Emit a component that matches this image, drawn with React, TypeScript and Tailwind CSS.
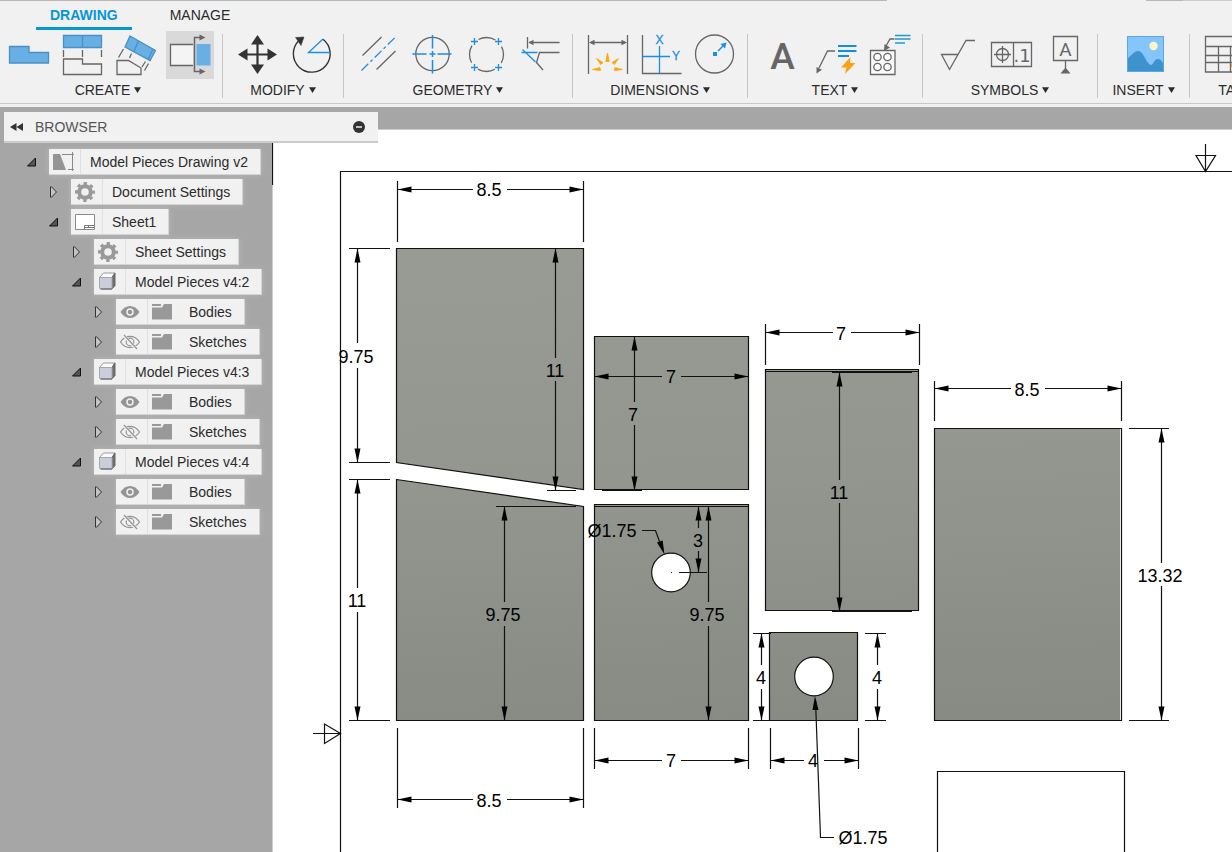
import React, { useState } from 'react';

const GREY = '#666666';
const BLUE = '#1a8fe8';
const SKY = '#68afe6';

interface ToolProps {
  label: string;
  active?: boolean;
  children: React.ReactNode;
}

const Tool: React.FC<ToolProps> = ({ label, active, children }) => (
  <button
    type="button"
    aria-label={label}
    className={`size-12 shrink-0 ${active ? 'bg-[#d9d9d9]' : 'hover:bg-[#e2e2e2]'}`}
  >
    <svg viewBox="0 0 48 48" className="size-12" fill="none" stroke={GREY} strokeWidth="1.3">
      {children}
    </svg>
  </button>
);

interface GroupProps {
  title: string;
  first?: boolean;
  children: React.ReactNode;
}

const Group: React.FC<GroupProps> = ({ title, first, children }) => (
  <div className="flex shrink-0">
    <div className={`flex min-w-[91px] flex-col items-center pr-2 ${first ? 'pl-1' : 'pl-[10px]'}`}>
      <div className="flex gap-[6px]">{children}</div>
      <button type="button" className="mt-[1px] flex h-5 items-center gap-1 pr-[2px] text-sm leading-5 text-[#2b2b2b]">
        {title}
        <svg viewBox="0 0 7 6" className="h-[6px] w-[7px]">
          <path d="M0 0.3h7L3.5 6z" fill="#2b2b2b" />
        </svg>
      </button>
    </div>
    <div className="mt-[3px] h-16 w-px bg-[#c6c6c6]" />
  </div>
);

const Toolbar = () => (
  <div className="flex h-[72px] overflow-hidden">
    <Group title="CREATE" first>
      <Tool label="Base View">
        <path d="M5.5 15.5H25v6h19.500v10.500h-39z" fill={SKY} stroke="#4a90c4" />
      </Tool>
      <Tool label="Projected View">
        <path d="M5.500 4.500h38v12h-38zM24.500 4.500v12" fill={SKY} stroke="#4a90c4" />
        <path d="M5.500 19v7M24.500 19v7M43.500 19v7" />
        <path d="M5.500 28h19v5h19v10.500h-38z" />
      </Tool>
      <Tool label="Auxiliary View">
        <path d="M18 5l25.500 14.500L38 29.500 13 16zM26.500 9.500L22 20.500M41 18l-5 10.500" fill={SKY} stroke="#4a90c4" />
        <path d="M11.500 18l-5 8.500M19.500 22.500l-2 4.500M33.500 30.500L30 36M36.500 32.500l-4 7" />
        <path d="M5 29.500h11.500L29 37v6.500H5z" />
      </Tool>
      <Tool label="Section View" active>
        <path d="M27 13.500H4.500v21H27z" fill="#f4f4f4" stroke="none" />
        <path d="M27 13.500H4.500v21H27" />
        <path d="M30.500 13h14v21.500h-14z" fill={SKY} stroke="none" />
        <path d="M34 6.500h-5.500v34H34" strokeWidth="1.500" />
        <path d="M33.500 3.500l6 3-6 3zM33.500 37.500l6 3-6 3z" fill={GREY} stroke="none" />
      </Tool>
    </Group>

    <Group title="MODIFY">
      <Tool label="Move">
        <path d="M24.500 8v31M9 23.500h31" stroke="#333" strokeWidth="2.200" />
        <path
          d="M24.500 4l6.500 9.500H18zM24.500 43l6.500-9.500H18zM5 23.500l9.500-6v12zM44 23.500l-9.500-6v12z"
          fill="#333"
          stroke="none"
        />
      </Tool>
      <Tool label="Rotate">
        <path d="M36 8.200A18.400 18.400 0 1 1 12 9.500" stroke="#333" strokeWidth="1.400" />
        <path d="M8.500 6.500L17 6l-3 8.500z" fill="#333" stroke="#333" strokeWidth="0.500" />
        <path d="M43 21.500H21.500L36 8" stroke={BLUE} />
      </Tool>
    </Group>

    <Group title="GEOMETRY">
      <Tool label="Centerline">
        <path d="M8.500 24.500l19-18.500M22.500 38.500l19-18.500" />
        <path d="M7.500 39.500L41.500 6" stroke={BLUE} strokeDasharray="9.500 3 3 3" />
      </Tool>
      <Tool label="Center Mark">
        <circle cx="24.500" cy="23" r="16.700" />
        <path
          d="M4.500 23h14M21.500 23h6M29.500 23h14M24.500 4v13.500M24.500 20v6M24.500 29v13.500"
          stroke={BLUE}
          strokeWidth="1.500"
        />
      </Tool>
      <Tool label="Center Mark Pattern">
        <circle cx="24.500" cy="23.500" r="17" strokeDasharray="17.800 8.900" strokeDashoffset="8.900" />
        <path
          d="M9 10.500h7M12.500 7v7M33 10.500h7M36.500 7v7M9 36.500h7M12.500 33v7M33 36.500h7M36.500 33v7"
          stroke={BLUE}
        />
      </Tool>
      <Tool label="Edge Extension">
        <path d="M11.500 6v11.500M13 11.500h30.500M43.500 21.500h-20l-3 10 6.500 7.500" />
        <path d="M12.500 11.500l5-2.800v5.600z" fill={GREY} stroke="none" />
        <path d="M5.500 21.500h16M6.500 18.500l13 12.500" stroke={BLUE} />
      </Tool>
    </Group>

    <Group title="DIMENSIONS">
      <Tool label="Dimension">
        <path d="M5.500 4v39M44.500 4v39M8 11.500h34" />
        <path d="M6 11.500l5.500-2.800v5.600zM44 11.500l-5.500-2.800v5.600z" fill={GREY} stroke="none" />
        <path
          d="M24.500 22l1.700 8.500h-3.400zM13.500 27.500l6.500 4-2.300 2zM35.500 27.500l-6.500 4 2.300 2zM9.500 38.500l7.500-2 .5 3zM39.500 38.500l-7.500-2-.5 3z"
          fill="#fba70b"
          stroke="#fba70b"
          strokeWidth="0.800"
        />
      </Tool>
      <Tool label="Ordinate Dimension">
        <path d="M5.500 4v38.500h39" />
        <path d="M22.500 15v27.500M5.500 25.500H33" stroke={BLUE} />
        <text x="22.500" y="12.500" textAnchor="middle" fontSize="12" fill={BLUE} stroke={BLUE} strokeWidth="0.300">
          X
        </text>
        <text x="39" y="29" textAnchor="middle" fontSize="12" fill={BLUE} stroke={BLUE} strokeWidth="0.300">
          Y
        </text>
      </Tool>
      <Tool label="Radius Dimension">
        <circle cx="23.500" cy="23" r="19" />
        <path d="M22 21h4v4h-4zM35.500 11.500l-1.500 6-4.500-4.500z" fill={BLUE} stroke="none" />
        <path d="M27 20l6-6" stroke={BLUE} strokeWidth="1.500" />
      </Tool>
    </Group>

    <Group title="TEXT">
      <Tool label="Text">
        <text x="24.500" y="37.500" textAnchor="middle" fontSize="37" fontWeight="500" fontFamily="Roboto, sans-serif" fill={GREY} stroke="none">
          A
        </text>
      </Tool>
      <Tool label="Leader Note">
        <path d="M23 20h-7.500L7 37" />
        <path d="M4.500 42.500l0-6.500 5.500 2.800z" fill={GREY} stroke="none" />
        <path d="M26 15h18.500M26 20h18.500M26 25h11" stroke="#0f8fe8" strokeWidth="2" />
        <path d="M38.500 26L29 36.500h5.500l-1.500 6.500 10.500-11H38z" fill="#f9a110" stroke="none" />
      </Tool>
      <Tool label="Hole Note">
        <path d="M4.500 19.500H29v24H4.500z" fill="#fafafa" />
        <circle cx="11.500" cy="26" r="3.700" />
        <circle cx="21.500" cy="26" r="3.700" />
        <circle cx="11.500" cy="36" r="3.700" />
        <circle cx="21.500" cy="36" r="3.700" />
        <path d="M28.500 8H24l-4 7" />
        <path d="M18 20l.500-7 5.500 3.500z" fill={GREY} stroke="none" />
        <path d="M29 4.500h15.500M29 8h15.500M29 12h10" stroke="#1b9bd1" />
      </Tool>
    </Group>

    <Group title="SYMBOLS">
      <Tool label="Surface Texture">
        <path d="M25.500 23.500h-17l8 15L33 9.500h9" />
      </Tool>
      <Tool label="Feature Control Frame">
        <path d="M4.500 11.500h40v24h-40zM26.500 11.500v24M7 23.500h17M15.500 15v17" />
        <circle cx="15.500" cy="23.500" r="6" />
        <text x="35" y="31" textAnchor="middle" fontSize="18" fontFamily="'DejaVu Sans', sans-serif" fill={GREY} stroke="none">
          .1
        </text>
      </Tool>
      <Tool label="Datum Identifier">
        <path d="M12.500 5.500h24v24h-24zM24.500 29.500v8" />
        <path d="M24.500 36.500l5 6h-10z" fill={GREY} stroke="none" />
        <text x="24.500" y="24.500" textAnchor="middle" fontSize="19" fontWeight="400" fontFamily="Roboto, sans-serif" fill={GREY} stroke="none">
          A
        </text>
      </Tool>
    </Group>

    <Group title="INSERT">
      <Tool label="Image">
        <path d="M6 5h37v36H6z" fill="#84c6fb" stroke="none" />
        <path
          d="M6 28c4-3 7-8 11-8 6 0 8 13 13 14 3-1 3-6 7-6 3 0 4 3 6 5v8H6z"
          fill="#3e92cd"
          stroke="none"
        />
        <path d="M6.500 5.500h36v35h-36z" stroke="#5aa7dc" strokeWidth="1" />
        <circle cx="32.500" cy="15" r="4.200" fill="#fbf7c4" stroke="none" />
      </Tool>
    </Group>

    <Group title="TABLES">
      <Tool label="Table">
        <path d="M5.500 5.500h39v35.500h-39zM5.500 15.500h39M5.500 24.500h39M5.500 31.500h39M18.500 15.500V41M30.500 15.500V41" />
        <path d="M31 33h12v3H31z" fill="#f9a110" stroke="none" />
      </Tool>
      <Tool label="Balloon">
        <circle cx="24" cy="18" r="12" />
        <path d="M16 27L6 41" />
      </Tool>
    </Group>
  </div>
);

type IconKind = 'drawing' | 'gear' | 'sheet' | 'box' | 'folder';

const NodeIcon: React.FC<{ kind: IconKind }> = ({ kind }) => (
  <svg viewBox="0 0 24 24" className="size-6" fill="none">
    {kind === 'drawing' && (
      <>
        <path d="M2 4h7l6 16H2z" fill="#949494" />
        <path d="M11 4.500h12M21.500 2v19M17 19.500h6" stroke="#8a8a8a" />
      </>
    )}
    {kind === 'gear' && (
      <>
        <circle cx="12" cy="12" r="5.800" stroke="#999" strokeWidth="4" />
        <circle cx="12" cy="12" r="8.500" stroke="#999" strokeWidth="3" strokeDasharray="3.300 3.376" strokeDashoffset="1.650" />
      </>
    )}
    {kind === 'sheet' && (
      <>
        <path d="M2.500 4.500h19v15h-19z" fill="#fff" stroke="#8a8a8a" />
        <path d="M11.500 19.500v-4h10M11.500 17.500h10M15.500 15.500v2" stroke="#777" />
      </>
    )}
    {kind === 'box' && (
      <>
        <path d="M3.500 7.500l4-4.500h11.500l-3 4.500z" fill="#fafafa" stroke="#999" strokeLinejoin="round" />
        <path d="M16 7.500l3-4.500v12.500l-3 3.500z" fill="#6d6f73" stroke="#666" strokeLinejoin="round" />
        <path d="M3.500 7.500H16V19H4.500l-1-1z" fill="#c9ced8" stroke="#a3a7ae" strokeLinejoin="round" />
        <path d="M4.500 19H16" stroke="#55585e" />
      </>
    )}
    {kind === 'folder' && (
      <path d="M2 4h9v2H2zM2 7.500h10l2-3.500h8v15.500H2z" fill="#999" />
    )}
  </svg>
);

const Eye: React.FC<{ open: boolean }> = ({ open }) => (
  <svg viewBox="0 0 24 24" className="size-6" fill="none">
    {open ? (
      <>
        <path d="M2.500 12c5-8 14-8 19 0-5 8-14 8-19 0z" fill="#949494" />
        <circle cx="12" cy="12" r="3" fill="#949494" stroke="#f1f1f1" strokeWidth="1.500" />
      </>
    ) : (
      <>
        <path d="M2.500 12c5-7.500 14-7.500 19 0-5 7.500-14 7.500-19 0z" stroke="#949494" strokeWidth="1.200" />
        <circle cx="12" cy="12" r="3.800" stroke="#949494" strokeWidth="1.200" />
        <path d="M5.500 5l13 14" stroke="#f1f1f1" strokeWidth="3" />
        <path d="M6 5l13 14" stroke="#949494" strokeWidth="1.200" />
      </>
    )}
  </svg>
);

interface TreeNode {
  label: string;
  icon: IconKind;
  level: number;
  expanded?: boolean;
  visible?: boolean;
}

const model = (label: string): TreeNode[] => [
  { label, icon: 'box', level: 2, expanded: true },
  { label: 'Bodies', icon: 'folder', level: 3, visible: true },
  { label: 'Sketches', icon: 'folder', level: 3, visible: false },
];

const nodes: TreeNode[] = [
  { label: 'Model Pieces Drawing v2', icon: 'drawing', level: 0, expanded: true },
  { label: 'Document Settings', icon: 'gear', level: 1 },
  { label: 'Sheet1', icon: 'sheet', level: 1, expanded: true },
  { label: 'Sheet Settings', icon: 'gear', level: 2 },
  ...model('Model Pieces v4:2'),
  ...model('Model Pieces v4:3'),
  ...model('Model Pieces v4:4'),
];

const indents = ['pl-[27px]', 'pl-[49px]', 'pl-[72px]', 'pl-[94px]'];

const Browser = () => (
  <aside className="w-[272px] shrink-0 pt-[5px]">
    <div className="relative z-10 ml-1 flex h-[31px] w-[374px] items-center border-b-2 border-[#cbcbcb] bg-[#f1f1f1] pr-3 pl-[6px]">
      <button type="button" aria-label="Collapse browser">
        <svg viewBox="0 0 13 8" className="h-2 w-[13px]" fill="#333">
          <path d="M6.500 0v8L0 4zM13 0v8L6.500 4z" />
        </svg>
      </button>
      <h2 className="ml-3 text-sm text-[#555]">BROWSER</h2>
      <button type="button" aria-label="Hide browser" className="ml-auto">
        <svg viewBox="0 0 14 14" className="size-[14px]">
          <circle cx="7" cy="7" r="6" fill="#333" />
          <path d="M4 7h6" stroke="#f1f1f1" strokeWidth="1.500" />
        </svg>
      </button>
    </div>
    <ul className="mt-1">
      {nodes.map((node, i) => (
        <li key={i} className={`flex h-[30px] items-center ${indents[node.level]}`}>
          <button type="button" aria-label={`Toggle ${node.label}`} className="w-[22px] shrink-0">
            <svg viewBox="0 0 10 12" className="h-3 w-[10px]">
              {node.expanded ? (
                <path d="M8.500 2v8h-8z" fill="#555" stroke="#111" />
              ) : (
                <path d="M1.500 0.800v10.400h1l5-5.200-5-5.200z" fill="#c4c4c4" stroke="#333" />
              )}
            </svg>
          </button>
          <div className="flex h-[26px] items-center border-r border-b border-[#d4d4d4] bg-[#f1f1f1] pr-3 shadow-[0_0_6px_rgba(255,255,255,0.2)]">
            {node.visible !== undefined && (
              <button
                type="button"
                aria-label={`Show ${node.label}`}
                className="flex h-full w-8 shrink-0 items-center border-r border-[#e0e0e0] pl-[2px]"
              >
                <Eye open={node.visible} />
              </button>
            )}
            <span
              className={`flex h-full w-8 shrink-0 items-center pl-[2px] ${
                node.visible === undefined ? 'border-r border-[#e0e0e0]' : ''
              }`}
            >
              <NodeIcon kind={node.icon} />
            </span>
            <span className="pl-[9px] text-sm whitespace-nowrap text-[#2b2b2b]">{node.label}</span>
          </div>
        </li>
      ))}
    </ul>
  </aside>
);

interface DimProps {
  at: number; // position of the dimension line on the other axis
  from: number;
  to: number;
  gap: [number, number];
  ext?: [number, number]; // extension lines
  label: string;
  tx: number;
  ty: number;
}

const Label: React.FC<{ x: number; y: number; children: string }> = ({ x, y, children }) => (
  <text x={x} y={y} textAnchor="middle" fill="#000" stroke="none">
    {children}
  </text>
);

const HDim: React.FC<DimProps> = ({ at, from, to, gap, ext, label, tx, ty }) => (
  <g>
    <path d={`M${from} ${at}H${gap[0]}M${gap[1]} ${at}H${to}`} />
    {ext && <path d={`M${from} ${ext[0]}V${ext[1]}M${to} ${ext[0]}V${ext[1]}`} />}
    <path d={`M${from} ${at}l14 -3v6zM${to} ${at}l-14 -3v6z`} fill="#000" stroke="none" />
    <Label x={tx} y={ty}>{label}</Label>
  </g>
);

const VDim: React.FC<DimProps> = ({ at, from, to, gap, ext, label, tx, ty }) => (
  <g>
    <path d={`M${at} ${from}V${gap[0]}M${at} ${gap[1]}V${to}`} />
    {ext && <path d={`M${ext[0]} ${from}H${ext[1]}M${ext[0]} ${to}H${ext[1]}`} />}
    <path d={`M${at} ${from}l-3 14h6zM${at} ${to}l-3 -14h6z`} fill="#000" stroke="none" />
    <Label x={tx} y={ty}>{label}</Label>
  </g>
);

const Sheet = () => (
  <svg
    viewBox="272 130 959 722"
    width="959"
    height="722"
    className="block overflow-visible"
    fill="none"
    stroke="#111"
    strokeWidth="1.200"
    fontSize="18"
    role="img"
    aria-label="Sheet1"
  >
    <defs>
      <linearGradient id="metal" gradientUnits="userSpaceOnUse" x1="700" y1="248" x2="720" y2="720">
        <stop offset="0" stopColor="#989a94" />
        <stop offset="0.500" stopColor="#93958f" />
        <stop offset="1" stopColor="#888a84" />
      </linearGradient>
    </defs>

    {/* sheet frame and centring marks */}
    <path d="M272.500 130V3000" stroke="#cdcdcd" strokeWidth="1" />
    <path d="M272.500 143v42" />
    <path d="M3000 171.500H340.500V3000" />
    <path d="M1205.500 144v27.500M1196 155.500h19.500l-10 16z" />
    <path d="M313 733.500h27.500M324.500 724v19.500l16-10z" />
    <path d="M937.500 3000V771.500h187V3000" />

    {/* pieces */}
    <g fill="url(#metal)">
      <path d="M396.500 248.500h187v241l-187-27z" />
      <path d="M396.500 479.500l187 27v214h-187z" />
      <path d="M594.500 336.500h154v153h-154z" />
      <path d="M594.500 504.500h154v216h-154z" />
      <path d="M765.500 369.500h153v241h-153z" />
      <path d="M769.500 632.500h88v88h-88z" />
      <path d="M934.500 428.500h187v292h-187z" />
    </g>
    <path d="M594.500 506.500h154M765.500 371.500h153" />
    <path d="M1120.500 429v291" stroke="#e8e8e8" strokeWidth="1" />
    <circle cx="671" cy="572.500" r="19.300" fill="#fff" />
    <circle cx="814" cy="676.500" r="19.300" fill="#fff" />
    <path d="M671 572.500h1" />

    <HDim at={189.5} from={397.5} to={583.5} gap={[473, 507]} ext={[181, 242]} label="8.5" tx={489} ty={196} />
    <HDim at={799.5} from={397.5} to={583.5} gap={[473, 507]} ext={[728, 808]} label="8.5" tx={489} ty={807} />
    <HDim at={376.5} from={594.5} to={748.5} gap={[662, 681]} label="7" tx={671} ty={383} />
    <HDim at={760.5} from={594.5} to={748.5} gap={[662, 681]} ext={[728, 769]} label="7" tx={671} ty={767} />
    <HDim at={332.5} from={765.5} to={919.5} gap={[833, 851]} ext={[324, 365]} label="7" tx={841} ty={340} />
    <HDim at={388.5} from={934.5} to={1121.5} gap={[1011, 1045]} ext={[381, 421]} label="8.5" tx={1027} ty={396} />
    <HDim at={760.5} from={770.5} to={858.5} gap={[804, 824]} ext={[728, 769]} label="4" tx={813} ty={767} />

    <VDim at={357.5} from={248.5} to={462.5} gap={[343, 368]} ext={[349, 390]} label="9.75" tx={356} ty={363} />
    <VDim at={357.5} from={479.5} to={720.5} gap={[588, 612]} ext={[349, 390]} label="11" tx={357} ty={607} />
    <VDim at={555.5} from={248.5} to={490.5} gap={[358, 381]} ext={[547, 576]} label="11" tx={555} ty={377} />
    <VDim at={504.5} from={506.5} to={720.5} gap={[602, 626]} ext={[496, 576]} label="9.75" tx={503} ty={621} />
    <VDim at={634.5} from={336.5} to={490.5} gap={[402, 425]} ext={[602, 642]} label="7" tx={633} ty={421} />
    <VDim at={839.5} from={372.5} to={611.5} gap={[480, 503]} ext={[832, 912]} label="11" tx={839} ty={499} />
    <VDim at={698.5} from={506.5} to={572.5} gap={[528, 551]} ext={[679, 707]} label="3" tx={698} ty={547} />
    <VDim at={708.5} from={506.5} to={720.5} gap={[602, 626]} ext={[700, 740]} label="9.75" tx={707} ty={621} />
    <VDim at={761.5} from={633.5} to={720.5} gap={[665, 689]} ext={[753, 771]} label="4" tx={761} ty={684} />
    <VDim at={877.5} from={633.5} to={720.5} gap={[665, 689]} ext={[865, 886]} label="4" tx={877} ty={684} />
    <VDim at={1161.5} from={428.5} to={720.5} gap={[563, 586]} ext={[1129, 1169]} label="13.32" tx={1160} ty={582} />

    {/* hole leaders */}
    <path d="M642 530.500h13.500l7 19" />
    <path d="M664.500 554.500l-7.500-12 5.600-2z" fill="#000" stroke="none" />
    <Label x={612} y={537}>Ø1.75</Label>
    <path d="M834 837.500h-13.500L815.500 700" />
    <path d="M815 696l3.500 14h-6z" fill="#000" stroke="none" />
    <Label x={863} y={844}>Ø1.75</Label>
  </svg>
);

const tabs = ['DRAWING', 'MANAGE'];

const App: React.FC = () => {
  const [tab, setTab] = useState('DRAWING');

  return (
    <div className="flex h-screen flex-col overflow-hidden bg-[#a6a6a6] font-['Liberation_Sans',Arial,sans-serif]">
      <header className="shrink-0 bg-[#f1f1f1] pb-[3px]">
        <div className="flex h-px">
          <div className="w-[72%] bg-[#b8b8b8]" />
          <div className="w-[21%]" />
          <div className="w-[3%] bg-[#b8b8b8]" />
          <div className="flex-1 bg-[#cdcdcd]" />
        </div>
        <nav className="flex h-[30px] gap-6 pb-px pl-9">
          {tabs.map((name) => (
            <button
              key={name}
              type="button"
              onClick={() => setTab(name)}
              className={`border-b-[3px] px-[14px] pt-[2px] text-sm leading-5 ${
                tab === name
                  ? 'border-[#0696d7] font-bold text-[#0696d7]'
                  : 'border-transparent text-[#2b2b2b]'
              }`}
            >
              {name}
            </button>
          ))}
        </nav>
        <Toolbar />
        <div className="h-px bg-[#c8c8c8]" />
      </header>

      <main className="flex min-h-0 flex-1">
        <Browser />
        <section className="mt-[22px] min-w-0 flex-1 overflow-hidden border-t border-[#cdcdcd] bg-white">
          <Sheet />
        </section>
      </main>
    </div>
  );
};

export default App;
